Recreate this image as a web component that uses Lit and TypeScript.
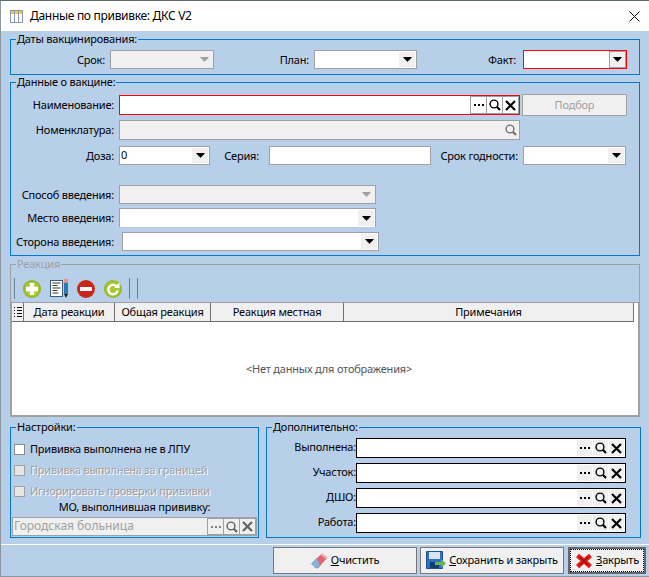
import { LitElement, html, css } from "lit";
import { customElement } from "lit/decorators.js";

const arrow = (dis = false) => html`<svg class="tri" width="9" height="5" viewBox="0 0 9 5"><path d="M0 0H9L6 3.500H5.500L4.500 5L3.500 3.500H3Z" fill=${dis ? "#a0a0a0" : "#000"}/></svg>`;
const dots = (c = "#000") => html`<svg width="10" height="2" viewBox="0 0 10 2"><g fill=${c}><rect x="0" width="2" height="2"/><rect x="4" width="2" height="2"/><rect x="8" width="2" height="2"/></g></svg>`;
const glass = (c = "#000") => html`<svg width="12" height="12" viewBox="0 0 12 12"><circle cx="5" cy="5" r="3.900" fill="none" stroke=${c} stroke-width="1.400"/><path d="M7.800 7.800L11 11" stroke=${c} stroke-width="2.200"/></svg>`;
const cross = (c = "#000") => html`<svg width="11" height="11" viewBox="0 0 11 11"><path d="M1 1L10 10M10 1L1 10" stroke=${c} stroke-width="2.200"/></svg>`;

@customElement("app-root")
export class AppRoot extends LitElement {
  static styles = css`
    :host { display: block; width: 649px; height: 577px; font: 11px/14px "Noto Sans", "Liberation Sans", Arial, sans-serif; letter-spacing: -.2px; color: #000; overflow: hidden; }
    * { box-sizing: border-box; }
    .win { width: 649px; height: 577px; display: flex; flex-direction: column; background: #b8cfe9; border-top: 1px solid #5e6a70; border-left: 1px solid #8c98a0; }
    .title { height: 30px; flex: none; background: #fff; display: flex; align-items: center; padding-left: 9px; gap: 7px; font-size: 12px; letter-spacing: -.3px; }
    .title .x { margin-left: auto; margin-right: 9px; display: flex; }
    fieldset { margin: 0; padding: 0; border: 1px solid #0078d7; min-width: 0; display: block; }
    legend { margin-left: 5px; padding: 0 1px; height: 14px; line-height: 14px; }
    .wide { margin: 0 9px; width: 630px; }
    .f1 { margin-top: 1px; padding: 4px 0 5px; }
    .f2 { padding: 6px 0 4px; }
    .f3 { margin-top: 1px; height: 161px; border-color: #a0a0a0; }
    .f3 legend { color: #a0a0a0; }
    .row { display: grid; align-items: center; height: 19px; }
    .lab { text-align: right; white-space: nowrap; padding-right: 5px; }
    .r1 { grid-template-columns: 99px 104px 100px 103px 106px 104px; }
    .r1 .fact { padding-right: 7px; }
    .r2 { grid-template-columns: 108px 401px 107px; height: 20px; }
    .r2 .btn { margin: -1px 0 -1px 2px; height: 22px; }
    .r3 { grid-template-columns: 108px 401px; margin-top: 5px; height: 20px; }
    .r4 { grid-template-columns: 108px 91px 59px 162px 92px 103px; margin-top: 6px; }
    .r5 { grid-template-columns: 108px 257px; margin-top: 20px; }
    .r6 { grid-template-columns: 108px 257px; margin-top: 4px; }
    .r7 { grid-template-columns: 111px 257px; margin-top: 5px; }
    .r4 .sp { padding-right: 10px; }
    .r7 .lab { padding-right: 8px; }
    .box { height: 19px; border: 1px solid #a0a0a0; background: #fff; display: flex; align-items: stretch; justify-content: flex-end; min-width: 0; }
    .box.tall { height: 20px; }
    .box.dis { background: #f0f0f0; }
    .box.red { border-color: #f00; }
    .box.black { border-color: #000; padding-right: 1px; }
    .box.nob { border-bottom: 0; }
    .val { flex: 1; padding-left: 1px; line-height: 15px; }
    .drop { width: 16px; margin: 1px; display: flex; align-items: center; justify-content: center; background: #f0f0f0; }
    .dis .drop { background: transparent; }
    .red .drop { border: 1px solid #a0a0a0; margin: 0; width: 17px; }
    .lbtn { width: 16px; display: flex; align-items: center; justify-content: center; }
    .red .lbtn { border: 1px solid #a0a0a0; margin-left: -1px; width: 17px; }
    .black .lbtn { background: #f0f0f0; margin: 1px 0 1px 1px; width: 15px; }
    .mo { height: 19px; margin: 2px 1px 0; width: 245px; background: #f0f0f0; }
    .mo .val { color: #a0a0a0; font-size: 12px; letter-spacing: 0; line-height: 16px; white-space: nowrap; }
    .mo .lbtn { border: 1px solid #a0a0a0; margin-left: -1px; width: 17px; }
    .btn { background: #f0f0f0; border: 1px solid #a0a0a0; display: flex; align-items: center; justify-content: center; color: #a0a0a0; white-space: nowrap; }
    .tools { height: 27px; margin-top: 4px; display: flex; align-items: center; padding-left: 3px; }
    .tools i { display: block; width: 1px; height: 21px; background: #6d7f90; flex: none; }
    .tools svg { display: block; flex: none; }
    .tools .a { margin-left: 8px; }
    .tools .b { margin-left: 9px; }
    .tools .c { margin-left: 7px; }
    .tools .d { margin-left: 7px; }
    .grid { height: 114px; display: flex; flex-direction: column; background: #fff; border: 1px solid #a0a0a0; }
    .head { height: 19px; width: 622px; flex: none; display: grid; grid-template-columns: 12px 91px 96px 133px 290px; background: #f0f0f0; border-bottom: 1px solid #707070; }
    .head span { border-right: 1px solid #707070; display: flex; align-items: center; justify-content: center; white-space: nowrap; }
    .empty { flex: 1; display: flex; align-items: center; justify-content: center; color: #555; padding-left: 8px; }
    .bottom { display: flex; gap: 7px; margin: 3px 0 0 9px; flex: none; }
    .f4 { width: 249px; height: 118px; padding-top: 4px; }
    .f5 { width: 375px; height: 118px; padding: 4px 0 0; }
    .chk { display: flex; align-items: center; height: 21px; padding-left: 3px; gap: 5px; }
    .chk b { display: block; width: 11px; height: 11px; background: #fff; border: 1px solid #8a8a8a; margin-top: 1px; }
    .chk.off { color: #a0a0a0; text-shadow: 1px 1px 0 #fff; }
    .chk.off b { background: #e6e6e6; border-color: #a0a0a0; }
    .cap { text-align: center; height: 16px; line-height: 16px; margin-top: -2px; }
    .r8 { grid-template-columns: 89px 270px; height: 20px; margin-bottom: 5px; }
    .r8 .lab { padding: 0 0 2px; }
    .foot { margin-top: 6px; flex: 1; border-top: 1px solid #fff; display: flex; justify-content: flex-end; gap: 3px; padding: 2px 3px 2px 0; border-bottom: 1px solid #8c98a0; }
    .act { height: 27px; width: 144px; background: #f0f0f0; border: 1px solid #777; display: flex; align-items: center; justify-content: center; gap: 3px; white-space: nowrap; }
    .act span { padding-bottom: 2px; }
    .act.def { width: 78px; border: 2px solid #666; margin-left: 1px; }
    .inner { border: 1px dotted #000; flex: 1; height: 100%; display: flex; align-items: center; justify-content: center; gap: 3px; }
  `;

  combo(cls = "", val = "") {
    const d = cls.includes("dis");
    return html`<div class="box ${cls}"><span class="val">${val}</span><span class="drop">${arrow(d)}</span></div>`;
  }

  lookup(cls: string) {
    return html`<div class="box ${cls}"><span class="val"></span><span class="lbtn">${dots()}</span><span class="lbtn">${glass()}</span><span class="lbtn">${cross()}</span></div>`;
  }

  tool(name: string) {
    switch (name) {
      case "plus": return html`<svg class="a" width="18" height="18" viewBox="0 0 18 18"><circle cx="9" cy="9" r="9" fill="#8fb31e"/><circle cx="9" cy="9" r="7.500" fill="#a8c838"/><path d="M6.800 3h4.400v3.800H15v4.400h-3.800V15H6.800v-3.800H3V6.800h3.800Z" fill="#fff"/></svg>`;
      case "doc": return html`<svg class="b" width="20" height="20" viewBox="0 0 20 20"><rect x=".5" y="1.500" width="12" height="16" fill="#fff" stroke="#3d5a78"/><path d="M2.500 4h8M2.500 6.500h5M2.500 9h8M2.500 11.500h5M2.500 14h6" stroke="#333"/><rect x="14" y="4" width="4" height="11" fill="#2b78b4"/><rect x="14" y="0" width="4" height="4" fill="#e88d8d"/><path d="M14 15h4l-2 4Z" fill="#222"/></svg>`;
      case "minus": return html`<svg class="c" width="18" height="18" viewBox="0 0 18 18"><circle cx="9" cy="9" r="9" fill="#c8281a"/><rect x="3" y="7" width="12" height="4" fill="#fff"/></svg>`;
      default: return html`<svg class="b" width="18" height="18" viewBox="0 0 18 18"><circle cx="9" cy="9" r="9" fill="#97bb22"/><circle cx="9" cy="9" r="7.500" fill="#a8c838"/><path d="M13.200 7.300A4.700 4.700 0 1 0 13.700 10.500" fill="none" stroke="#fff" stroke-width="2.300"/><path d="M10 8h5.500V2.500Z" fill="#fff"/></svg>`;
    }
  }

  render() {
    return html`<div class="win">
      <div class="title">
        <svg width="13" height="13" viewBox="0 0 13 13"><rect x=".5" y=".5" width="12" height="12" fill="#fff" stroke="#8a9aa8"/><rect x="1" y="1" width="11" height="3" fill="#f2c84a"/><path d="M4.500 1v11M8.500 1v11" stroke="#8a9aa8"/></svg>
        <span>Данные по прививке: ДКС V2</span>
        <span class="x"><svg width="11" height="11" viewBox="0 0 11 11"><path d="M.5 .5L10.500 10.500M10.500 .5L.5 10.500" stroke="#000" fill="none"/></svg></span>
      </div>

      <fieldset class="wide f1"><legend>Даты вакцинирования:</legend>
        <div class="row r1">
          <span class="lab">Срок:</span>${this.combo("dis")}
          <span class="lab">План:</span>${this.combo()}
          <span class="lab fact">Факт:</span>${this.combo("red")}
        </div>
      </fieldset>

      <fieldset class="wide f2"><legend>Данные о вакцине:</legend>
        <div class="row r2"><span class="lab">Наименование:</span>${this.lookup("red tall")}<div class="btn">Подбор</div></div>
        <div class="row r3"><span class="lab">Номенклатура:</span><div class="box dis tall"><span class="val"></span><span class="lbtn">${glass("#707070")}</span></div></div>
        <div class="row r4"><span class="lab">Доза:</span>${this.combo("", "0")}<span class="lab sp">Серия:</span><div class="box"></div><span class="lab">Срок годности:</span>${this.combo()}</div>
        <div class="row r5"><span class="lab">Способ введения:</span>${this.combo("dis")}</div>
        <div class="row r6"><span class="lab">Место введения:</span>${this.combo("nob")}</div>
        <div class="row r7"><span class="lab">Сторона введения:</span>${this.combo()}</div>
      </fieldset>

      <fieldset class="wide f3"><legend>Реакция</legend>
        <div class="tools"><i></i>${this.tool("plus")}${this.tool("doc")}${this.tool("minus")}${this.tool("refresh")}<i class="d"></i><i class="d"></i></div>
        <div class="grid">
          <div class="head"><span><svg width="8" height="10" viewBox="0 0 8 10"><path d="M0 .5h1M3 .5h5M0 3.500h1M3 3.500h5M0 6.500h1M3 6.500h5M0 9.500h1M3 9.500h5" stroke="#000"/></svg></span><span>Дата реакции</span><span>Общая реакция</span><span>Реакция местная</span><span>Примечания</span></div>
          <div class="empty">&lt;Нет данных для отображения&gt;</div>
        </div>
      </fieldset>

      <div class="bottom">
        <fieldset class="f4"><legend>Настройки:</legend>
          <label class="chk"><b></b>Прививка выполнена не в ЛПУ</label>
          <label class="chk off"><b></b>Прививка выполнена за границей</label>
          <label class="chk off"><b></b>Игнорировать проверки прививки</label>
          <div class="cap">МО, выполнившая прививку:</div>
          <div class="box mo"><span class="val">Городская больница</span><span class="lbtn">${dots("#808080")}</span><span class="lbtn">${glass("#606060")}</span><span class="lbtn">${cross("#606060")}</span></div>
        </fieldset>
        <fieldset class="f5"><legend>Дополнительно:</legend>
          <div class="row r8"><span class="lab">Выполнена:</span>${this.lookup("black tall")}</div>
          <div class="row r8"><span class="lab">Участок:</span>${this.lookup("black tall")}</div>
          <div class="row r8"><span class="lab">ДШО:</span>${this.lookup("black tall")}</div>
          <div class="row r8"><span class="lab">Работа:</span>${this.lookup("black tall")}</div>
        </fieldset>
      </div>

      <div class="foot">
        <div class="act">
          <svg width="17" height="16" viewBox="0 0 17 16"><path d="M6 5L11 .5l5.500 4L9 13Z" fill="#e0666e"/><path d="M6 5L.5 10.500l4 4.500H7l2-2Z" fill="#8fb0d8" stroke="#6f8fb0" stroke-width=".6"/><path d="M11 .5l5.500 4-1.500 1.500L9.500 2Z" fill="#f4b0b0"/></svg>
          <span><u>О</u>чистить</span>
        </div>
        <div class="act">
          <svg width="20" height="20" viewBox="0 0 20 20"><path d="M.5 .5h16v17H.5Z" fill="#2f6fc0" stroke="#1e4f96"/><rect x="3" y="1" width="11" height="7" fill="#d8e6f4"/><rect x="4" y="11" width="9" height="6" fill="#173d78"/><path d="M9 11h6V8l5 4.500-5 4.500v-3H9Z" fill="#63b946"/></svg>
          <span><u>С</u>охранить и закрыть</span>
        </div>
        <div class="act def"><div class="inner">
          <svg width="18" height="16" viewBox="0 0 18 16"><path d="M2.500 2.500L15.500 13.500M15.500 2.500L2.500 13.500" stroke="#e01818" stroke-width="4.500"/><path d="M5 4.500L13 11.500M13 4.500L5 11.500" stroke="#a81010" stroke-width="1.500"/></svg>
          <span><u>З</u>акрыть</span>
        </div></div>
      </div>
    </div>`;
  }
}
